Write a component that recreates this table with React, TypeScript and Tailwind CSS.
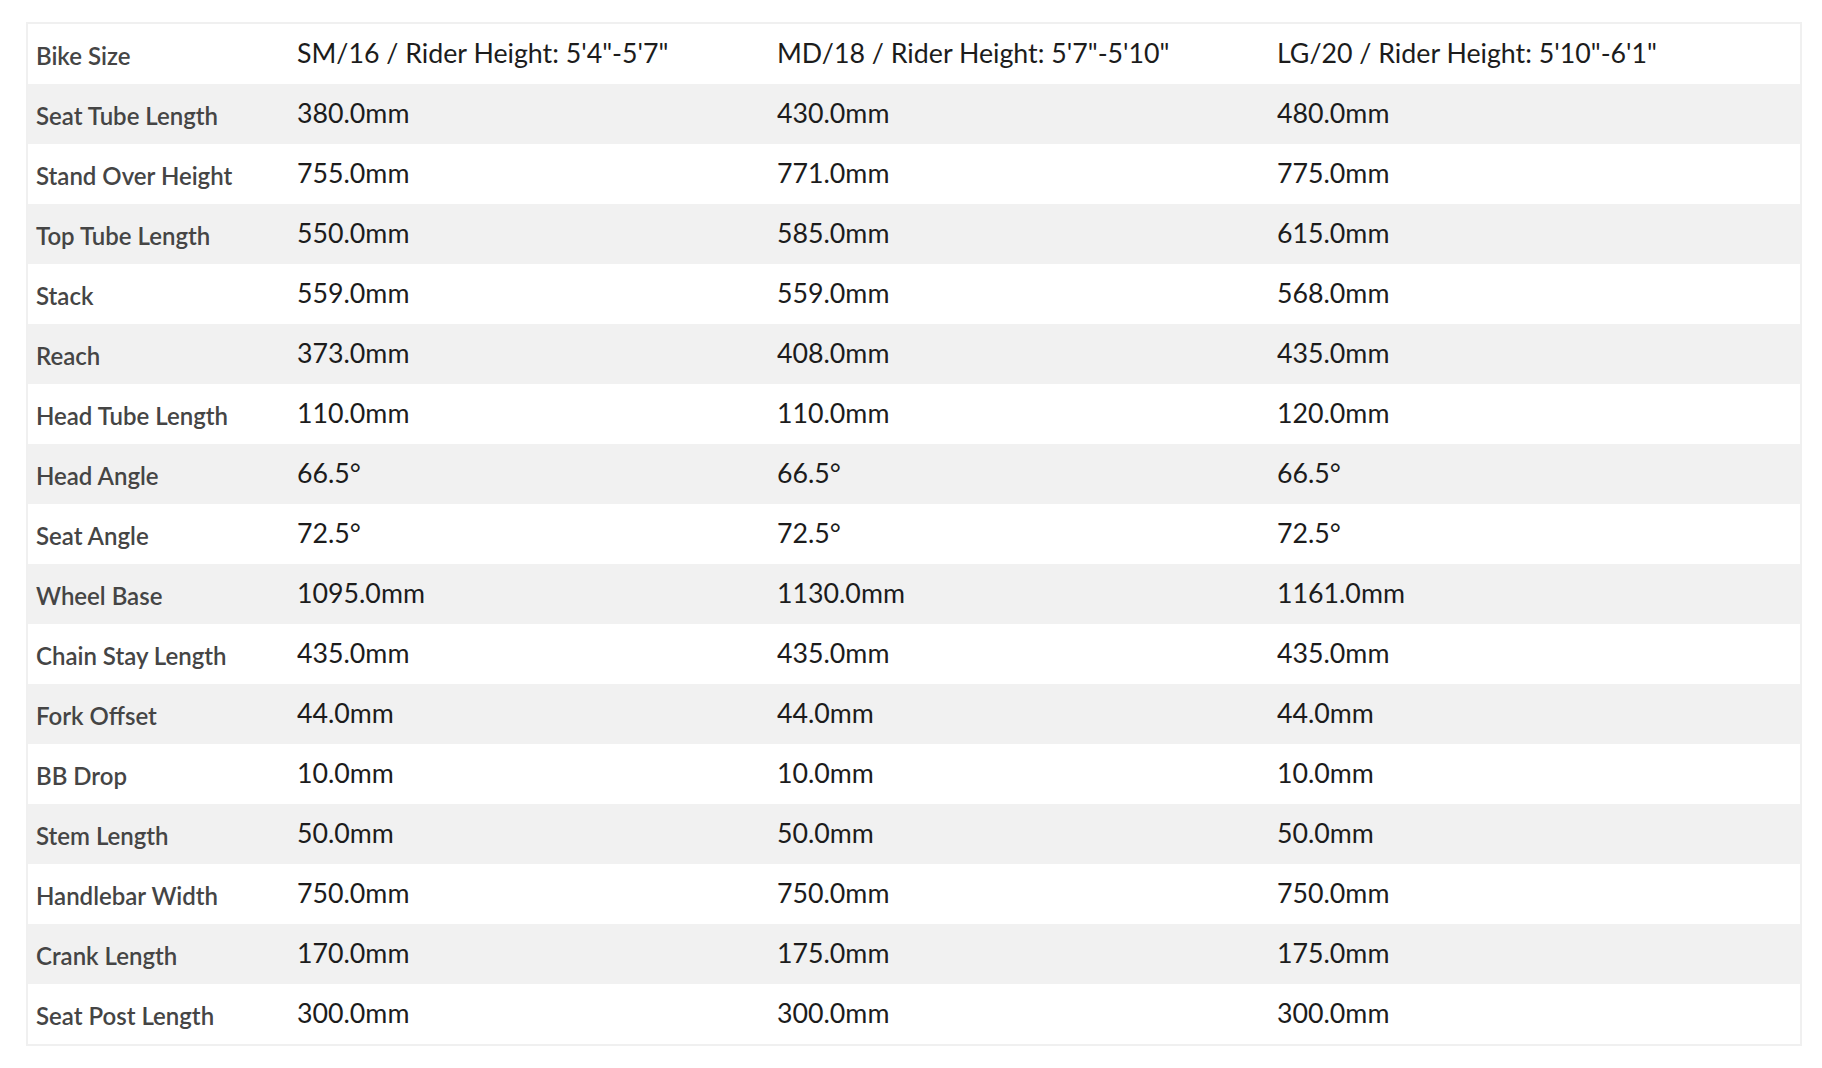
import React from "react";

const rows: [string, string, string, string][] = [
  ["Bike Size", "SM/16 / Rider Height: 5'4\"-5'7\"", "MD/18 / Rider Height: 5'7\"-5'10\"", "LG/20 / Rider Height: 5'10\"-6'1\""],
  ["Seat Tube Length", "380.0mm", "430.0mm", "480.0mm"],
  ["Stand Over Height", "755.0mm", "771.0mm", "775.0mm"],
  ["Top Tube Length", "550.0mm", "585.0mm", "615.0mm"],
  ["Stack", "559.0mm", "559.0mm", "568.0mm"],
  ["Reach", "373.0mm", "408.0mm", "435.0mm"],
  ["Head Tube Length", "110.0mm", "110.0mm", "120.0mm"],
  ["Head Angle", "66.5°", "66.5°", "66.5°"],
  ["Seat Angle", "72.5°", "72.5°", "72.5°"],
  ["Wheel Base", "1095.0mm", "1130.0mm", "1161.0mm"],
  ["Chain Stay Length", "435.0mm", "435.0mm", "435.0mm"],
  ["Fork Offset", "44.0mm", "44.0mm", "44.0mm"],
  ["BB Drop", "10.0mm", "10.0mm", "10.0mm"],
  ["Stem Length", "50.0mm", "50.0mm", "50.0mm"],
  ["Handlebar Width", "750.0mm", "750.0mm", "750.0mm"],
  ["Crank Length", "170.0mm", "175.0mm", "175.0mm"],
  ["Seat Post Length", "300.0mm", "300.0mm", "300.0mm"],
];

export default function App() {
  return (
    <div className="min-h-screen bg-white pl-[26px] pt-[22px] font-['Lato',sans-serif]">
      <div className="w-[1776px] border-2 border-[#f0f0f0]">
        {rows.map((r, i) => (
          <div
            key={r[0]}
            className={`grid h-[60px] grid-cols-[261px_480px_500px_531px] items-center ${i % 2 === 1 ? "bg-[#f1f1f1]" : "bg-white"}`}
          >
            <div className="pl-2 pt-[3px] text-[24px] font-semibold text-[#454545]">{r[0]}</div>
            <div className="pl-2 pb-[1px] text-[26.75px] text-[#1c1c1c]">{r[1]}</div>
            <div className="pl-2 pb-[1px] text-[26.75px] text-[#1c1c1c]">{r[2]}</div>
            <div className="pl-2 pb-[1px] text-[26.75px] text-[#1c1c1c]">{r[3]}</div>
          </div>
        ))}
      </div>
    </div>
  );
}
